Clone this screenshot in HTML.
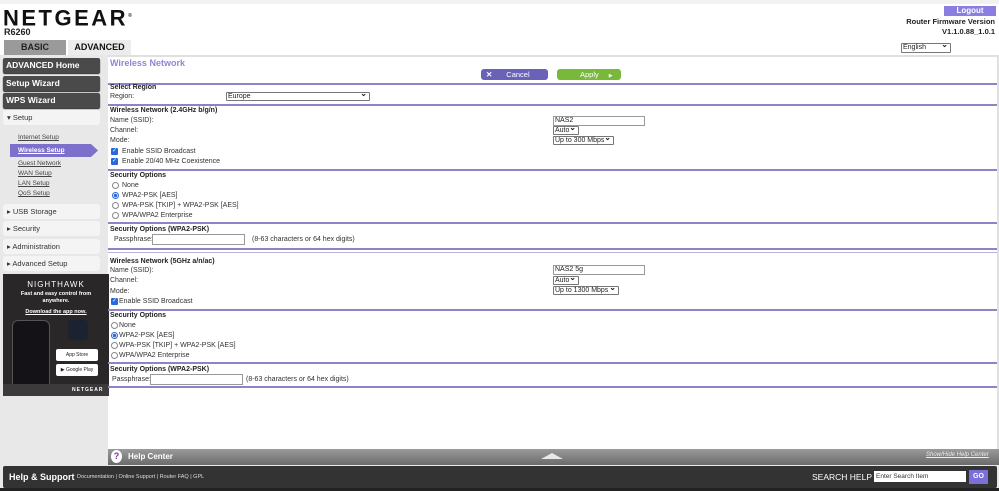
<!DOCTYPE html>
<html><head><meta charset="utf-8"><style>
*{margin:0;padding:0;box-sizing:border-box}
body{width:999px;height:491px;position:relative;overflow:hidden;background:#fff;font-family:"Liberation Sans",Arial,sans-serif;color:#222}
.a{position:absolute;white-space:nowrap}
.t{font-size:7px;color:#333}
.b{font-size:7px;font-weight:bold;color:#222}
.ln{position:absolute;left:108px;width:889px;height:2px;background:#8c84c4}
.sb{position:absolute;left:3px;width:97px;height:15px;background:#4a4a4a;border-radius:2px;color:#fff;font-weight:bold;font-size:8.5px;padding:2px 3px;box-shadow:0 1px 1px #222}
.lb{position:absolute;left:3px;width:97px;height:15px;background:#f4f4f4;border-radius:3px;color:#333;font-size:7.5px;padding:3px 4px}
.lk{position:absolute;left:18px;font-size:6.5px;color:#444;text-decoration:underline}
.inp{position:absolute;border:1px solid #999;background:#fff;height:10px;font-size:7px;padding-left:1px;line-height:8px}
.sel{position:absolute;border:1px solid #777;background:#fff;height:9px;font-size:7px;padding-left:1px;line-height:7px;border-radius:1px}
.sel:after{content:"⌄";position:absolute;right:2px;top:-3px;font-size:8px;font-weight:bold}
.cb{position:absolute;width:7px;height:7px;background:#2a6ad8;border-radius:1px;color:#fff;font-size:6px;line-height:7px;text-align:center}
.rd{position:absolute;width:7px;height:7px;border:1px solid #888;border-radius:50%;background:#fff}
.rd.on{border-color:#2a6ad8;background:radial-gradient(circle,#2a6ad8 45%,#fff 55%)}
</style></head><body>
<div class="a" style="left:0;top:0;width:999px;height:4px;background:#f2f2f2"></div>
<div class="a" style="left:3px;top:4px;font-size:22px;font-weight:900;letter-spacing:2.5px;color:#111;line-height:24px">NETGEAR<sup style="font-size:5px">®</sup></div>
<div class="a" style="left:4px;top:27px;font-size:9px;font-weight:bold;color:#222">R6260</div>
<div class="a" style="left:4px;top:40px;width:62px;height:15px;background:#9a9a9a;color:#222;font-weight:bold;font-size:9px;text-align:center;line-height:15px">BASIC</div>
<div class="a" style="left:68px;top:40px;width:63px;height:15px;background:#ececec;color:#111;font-weight:bold;font-size:9px;text-align:center;line-height:15px">ADVANCED</div>
<div class="a" style="left:944px;top:6px;width:52px;height:10px;background:#8a7fe0;color:#fff;font-size:8px;font-weight:bold;text-align:center;line-height:10px">Logout</div>
<div class="a" style="right:4px;top:17px;font-size:7.5px;font-weight:bold;text-align:right;line-height:10px">Router Firmware Version<br>V1.1.0.88_1.0.1</div>
<div class="sel" style="left:901px;top:43px;width:50px;height:10px">English</div>
<div class="a" style="left:0;top:55px;width:108px;height:410px;background:#e8e8e8"></div>
<div class="a" style="left:108px;top:55px;width:891px;height:2px;background:#e0e0e0"></div>
<div class="a" style="left:997px;top:55px;width:2px;height:410px;background:#e0e0e0"></div>
<div class="sb" style="top:58px">ADVANCED Home</div>
<div class="sb" style="top:76px">Setup Wizard</div>
<div class="sb" style="top:93px">WPS Wizard</div>
<div class="lb" style="top:110px">▾ Setup</div>
<div class="lk" style="top:134px">Internet Setup</div>
<div class="a" style="left:10px;top:144px;width:88px;height:13px;background:#7c70cc;clip-path:polygon(0 0,92% 0,100% 50%,92% 100%,0 100%)"></div>
<div class="lk" style="top:147px;color:#fff;font-weight:bold">Wireless Setup</div>
<div class="lk" style="top:160px">Guest Network</div>
<div class="lk" style="top:170px">WAN Setup</div>
<div class="lk" style="top:180px">LAN Setup</div>
<div class="lk" style="top:190px">QoS Setup</div>
<div class="lb" style="top:204px">▸ USB Storage</div>
<div class="lb" style="top:221px">▸ Security</div>
<div class="lb" style="top:239px">▸ Administration</div>
<div class="lb" style="top:256px">▸ Advanced Setup</div>
<div class="a" style="left:3px;top:274px;width:106px;height:122px;background:#2a2728"></div>
<div class="a" style="left:3px;top:280px;width:106px;text-align:center;color:#fff;font-size:8px;letter-spacing:1px">NIGHTHAWK</div>
<div class="a" style="left:3px;top:291px;width:106px;text-align:center;color:#fff;font-size:5.5px;font-weight:bold;line-height:7px;white-space:normal">Fast and easy control from<br>anywhere.</div>
<div class="a" style="left:3px;top:309px;width:106px;text-align:center;color:#fff;font-size:5.5px;font-weight:bold;text-decoration:underline">Download the app now.</div>
<div class="a" style="left:12px;top:320px;width:38px;height:76px;background:#141216;border-radius:6px 6px 0 0;border:1px solid #555"></div>
<div class="a" style="left:68px;top:320px;width:20px;height:20px;background:#1b2230;border-radius:4px"></div>
<div class="a" style="left:56px;top:349px;width:42px;height:12px;background:#fff;border-radius:2px;font-size:5px;line-height:12px;text-align:center"> App Store</div>
<div class="a" style="left:56px;top:364px;width:42px;height:12px;background:#fff;border-radius:2px;font-size:5px;line-height:12px;text-align:center">▶ Google Play</div>
<div class="a" style="left:3px;top:384px;width:106px;height:12px;background:#3c3a3b"></div>
<div class="a" style="left:72px;top:387px;color:#fff;font-size:5px;font-weight:bold;letter-spacing:1px">NETGEAR</div>
<div class="a" style="left:110px;top:58px;font-size:9px;font-weight:bold;color:#8f86d4">Wireless Network</div>
<div class="a" style="left:481px;top:69px;width:67px;height:11px;background:#6a62b8;border-radius:3px;color:#fff;font-size:7.5px;line-height:11px"><span style="margin-left:5px;font-weight:bold">✕</span><span style="margin-left:14px">Cancel</span></div>
<div class="a" style="left:557px;top:69px;width:64px;height:11px;background:#78b83a;border-radius:3px;color:#fff;font-size:7.5px;line-height:11px"><span style="margin-left:23px">Apply</span><span style="margin-left:10px;font-size:5px">▶</span></div>
<div class="ln" style="top:83px"></div>
<div class="a b" style="left:110px;top:84px">Select Region</div>
<div class="a t" style="left:110px;top:93px">Region:</div>
<div class="sel" style="left:226px;top:92px;width:144px">Europe</div>
<div class="ln" style="top:104px"></div>
<div class="a b" style="left:110px;top:107px">Wireless Network (2.4GHz b/g/n)</div>
<div class="a t" style="left:110px;top:117px">Name (SSID):</div>
<div class="inp" style="left:553px;top:116px;width:92px">NAS2</div>
<div class="a t" style="left:110px;top:127px">Channel:</div>
<div class="sel" style="left:553px;top:126px;width:26px">Auto</div>
<div class="a t" style="left:110px;top:137px">Mode:</div>
<div class="sel" style="left:553px;top:136px;width:61px">Up to 300 Mbps</div>
<div class="cb" style="left:111px;top:148px">✓</div><div class="a t" style="left:122px;top:148px">Enable SSID Broadcast</div>
<div class="cb" style="left:111px;top:158px">✓</div><div class="a t" style="left:122px;top:158px">Enable 20/40 MHz Coexistence</div>
<div class="ln" style="top:169px"></div>
<div class="a b" style="left:110px;top:172px">Security Options</div>
<div class="rd" style="left:112px;top:182px"></div><div class="a t" style="left:122px;top:182px">None</div>
<div class="rd on" style="left:112px;top:192px"></div><div class="a t" style="left:122px;top:192px">WPA2-PSK [AES]</div>
<div class="rd" style="left:112px;top:202px"></div><div class="a t" style="left:122px;top:202px">WPA-PSK [TKIP] + WPA2-PSK [AES]</div>
<div class="rd" style="left:112px;top:212px"></div><div class="a t" style="left:122px;top:212px">WPA/WPA2 Enterprise</div>
<div class="ln" style="top:222px"></div>
<div class="a b" style="left:110px;top:226px">Security Options (WPA2-PSK)</div>
<div class="a t" style="left:114px;top:236px">Passphrase:</div>
<div class="inp" style="left:152px;top:234px;width:93px;height:11px"></div>
<div class="a t" style="left:252px;top:236px">(8-63 characters or 64 hex digits)</div>
<div class="ln" style="top:248px"></div>
<div class="ln" style="top:252px;height:1px;background:#b8b2dc"></div>
<div class="a b" style="left:110px;top:258px">Wireless Network (5GHz a/n/ac)</div>
<div class="a t" style="left:110px;top:267px">Name (SSID):</div>
<div class="inp" style="left:553px;top:265px;width:92px">NAS2 5g</div>
<div class="a t" style="left:110px;top:277px">Channel:</div>
<div class="sel" style="left:553px;top:276px;width:26px">Auto</div>
<div class="a t" style="left:110px;top:288px">Mode:</div>
<div class="sel" style="left:553px;top:286px;width:66px">Up to 1300 Mbps</div>
<div class="cb" style="left:111px;top:298px">✓</div><div class="a t" style="left:119px;top:298px">Enable SSID Broadcast</div>
<div class="ln" style="top:309px"></div>
<div class="a b" style="left:110px;top:312px">Security Options</div>
<div class="rd" style="left:111px;top:322px"></div><div class="a t" style="left:119px;top:322px">None</div>
<div class="rd on" style="left:111px;top:332px"></div><div class="a t" style="left:119px;top:332px">WPA2-PSK [AES]</div>
<div class="rd" style="left:111px;top:342px"></div><div class="a t" style="left:119px;top:342px">WPA-PSK [TKIP] + WPA2-PSK [AES]</div>
<div class="rd" style="left:111px;top:352px"></div><div class="a t" style="left:119px;top:352px">WPA/WPA2 Enterprise</div>
<div class="ln" style="top:362px"></div>
<div class="a b" style="left:110px;top:366px">Security Options (WPA2-PSK)</div>
<div class="a t" style="left:112px;top:376px">Passphrase:</div>
<div class="inp" style="left:150px;top:374px;width:93px;height:11px"></div>
<div class="a t" style="left:246px;top:376px">(8-63 characters or 64 hex digits)</div>
<div class="ln" style="top:386px"></div>
<div class="a" style="left:108px;top:449px;width:891px;height:16px;background:linear-gradient(#9a9a9a,#6a6a6a)"></div>
<div class="a" style="left:111px;top:450px;width:11px;height:13px;border-radius:50%;background:#fff;color:#7a3a8a;font-size:9px;font-weight:bold;text-align:center;line-height:13px">?</div>
<div class="a" style="left:128px;top:452px;color:#fff;font-size:8px;font-weight:bold">Help Center</div>
<div class="a" style="left:541px;top:453px;width:0;height:0;border-left:11px solid transparent;border-right:11px solid transparent;border-bottom:6px solid #e8e8e8"></div>
<div class="a" style="left:926px;top:452px;color:#eee;font-size:6px;text-decoration:underline;font-style:italic">Show/Hide Help Center</div>
<div class="a" style="left:0;top:465px;width:999px;height:26px;background:#e8e8e8"></div>
<div class="a" style="left:3px;top:466px;width:994px;height:22px;background:#333;border-radius:2px"></div>
<div class="a" style="left:0;top:488px;width:999px;height:3px;background:#222"></div>
<div class="a" style="left:9px;top:472px;color:#fff;font-size:9px;font-weight:bold">Help &amp; Support</div>
<div class="a" style="left:77px;top:474px;color:#ddd;font-size:5.5px">Documentation | Online Support | Router FAQ | GPL</div>
<div class="a" style="left:812px;top:472px;color:#fff;font-size:8.5px">SEARCH HELP</div>
<div class="a" style="left:874px;top:471px;width:92px;height:11px;background:#fff;font-size:6.5px;line-height:11px;padding-left:2px;color:#333">Enter Search Item</div>
<div class="a" style="left:969px;top:470px;width:19px;height:14px;background:#7a70d8;color:#fff;font-size:7px;font-weight:bold;text-align:center;line-height:14px">GO</div>
</body></html>
